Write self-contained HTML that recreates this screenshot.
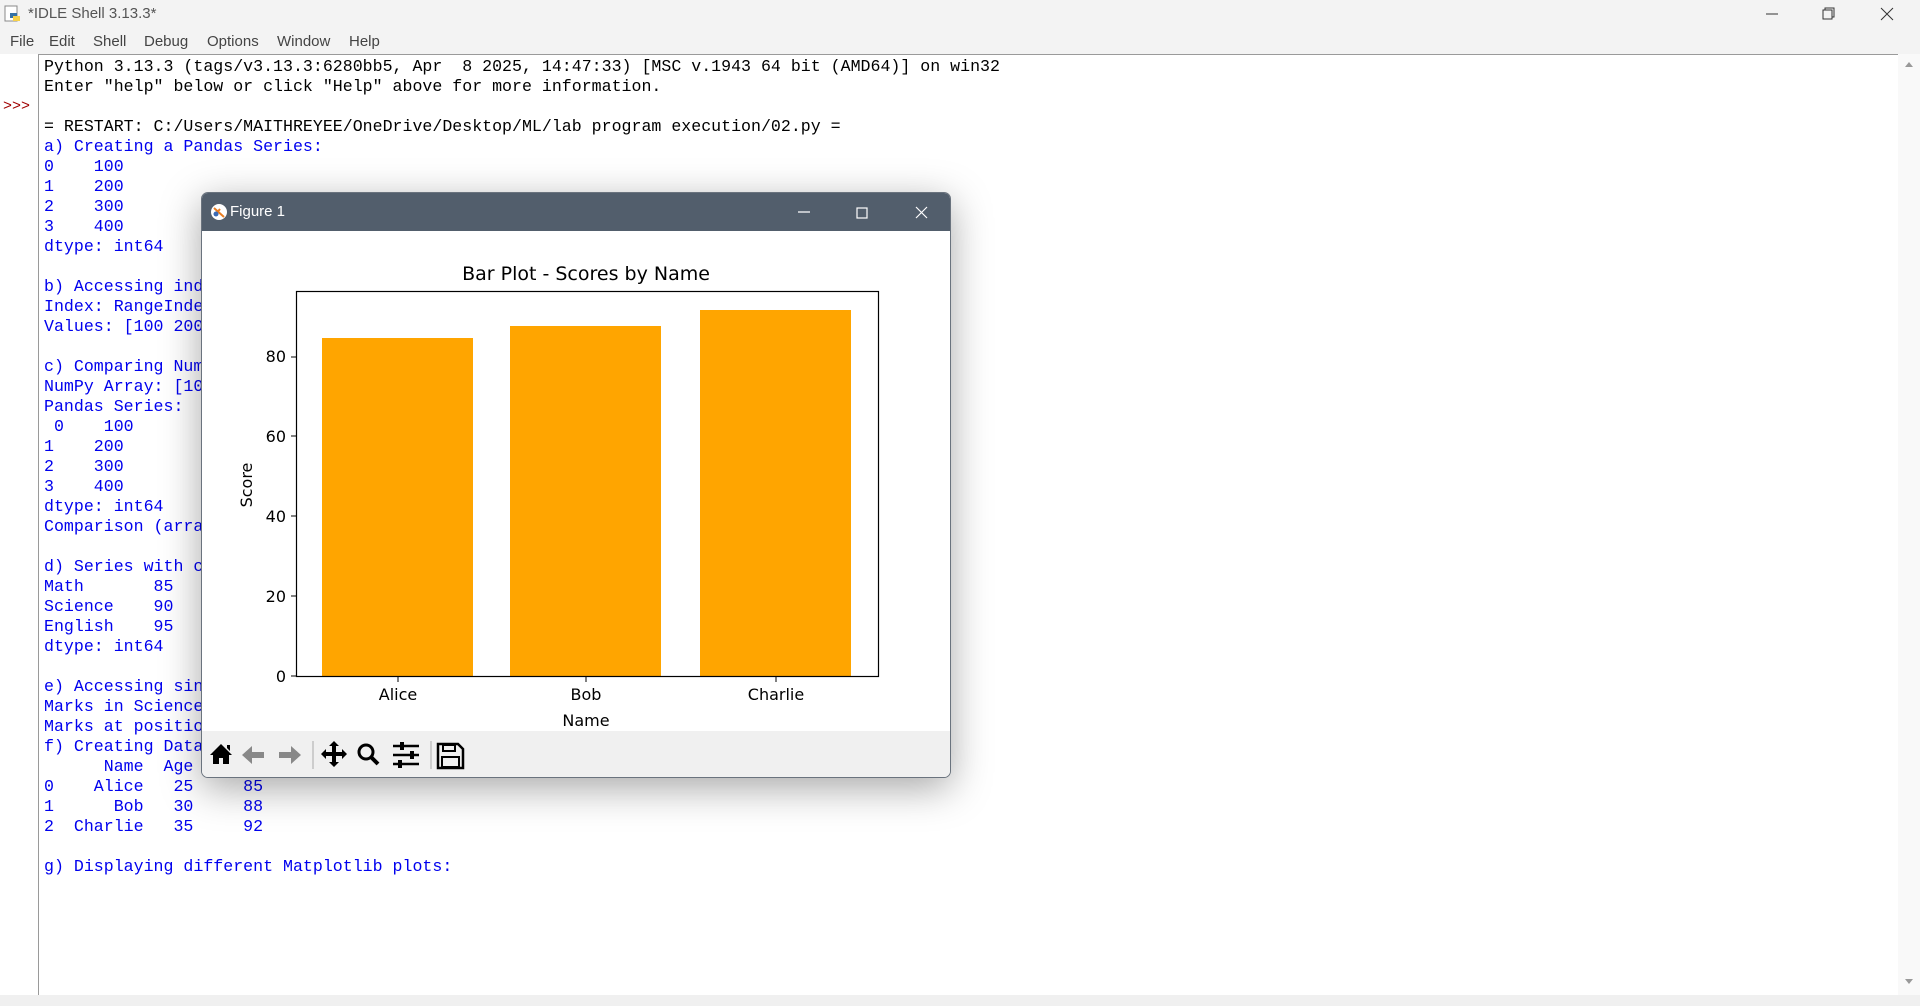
<!DOCTYPE html>
<html><head><meta charset="utf-8"><style>
*{margin:0;padding:0;box-sizing:border-box}
body{width:1920px;height:1006px;overflow:hidden;background:#fff;position:relative;font-family:"Liberation Sans",sans-serif}
.tb{position:absolute;left:0;top:0;width:1920px;height:29px;background:#f3f3f3}
.mb{position:absolute;left:0;top:29px;width:1920px;height:25px;background:#f3f3f3}
.mb span{position:absolute;top:4px;font-size:15px;color:#444}
.ta{position:absolute;left:38px;top:54px;width:1860px;height:941px;border-left:1px solid #9a9a9a;border-top:1px solid #9a9a9a;background:#fff}
pre{position:absolute;left:44px;top:57px;font-family:"Liberation Mono",monospace;font-size:16.6px;line-height:20px;color:#0000ee}
.k{color:#000}
.sb{position:absolute;left:1898px;top:54px;width:22px;height:941px;background:#f9f9f9}
.st{position:absolute;left:0;top:995px;width:1920px;height:11px;background:#f0f0f0}
.fig{position:absolute;left:201px;top:192px;width:750px;height:586px;background:#fff;border-radius:7px;overflow:hidden;box-shadow:0 10px 40px rgba(0,0,0,.35);border:1px solid #6a737e}
.ft{height:38px;background:#525e6c;color:#fff;font-size:15px;position:relative}
.tool{position:absolute;left:0;top:538px;width:750px;height:48px;background:#f0f0f0}
</style></head><body>
<div class="tb">
<svg style="position:absolute;left:4px;top:5px" width="18" height="18"><rect x="1" y="1" width="12" height="15" fill="#fff" stroke="#888"/><rect x="6" y="8" width="7" height="5" fill="#3572a5"/><rect x="9" y="11" width="7" height="5" fill="#f7d14a"/></svg>
<span style="position:absolute;left:28px;top:5px;font-size:15px;color:#555">*IDLE Shell 3.13.3*</span>
<svg style="position:absolute;left:1762px;top:6px" width="140" height="18" stroke="#333" fill="none" stroke-width="1"><line x1="4" y1="8" x2="16" y2="8"/><rect x="61" y="4" width="9" height="9"/><path d="M63 4V2h9v9h-2"/><path d="M119 2l12 12M131 2l-12 12"/></svg>
</div>
<div class="mb"><span style="left:10px">File</span><span style="left:49px">Edit</span><span style="left:93px">Shell</span><span style="left:144px">Debug</span><span style="left:207px">Options</span><span style="left:277px">Window</span><span style="left:349px">Help</span></div>
<div class="ta"></div>
<div style="position:absolute;left:3px;top:98px;font-family:'Liberation Mono',monospace;font-size:15px;color:#a00000">&gt;&gt;&gt;</div>
<pre><span class="k">Python 3.13.3 (tags/v3.13.3:6280bb5, Apr  8 2025, 14:47:33) [MSC v.1943 64 bit (AMD64)] on win32
Enter "help" below or click "Help" above for more information.

= RESTART: C:/Users/MAITHREYEE/OneDrive/Desktop/ML/lab program execution/02.py =</span>
a) Creating a Pandas Series:
0    100
1    200
2    300
3    400
dtype: int64

b) Accessing index and values:
Index: RangeIndex(start=0, stop=4, step=1)
Values: [100 200 300 400]

c) Comparing NumPy Array and Pandas Series:
NumPy Array: [100 200 300 400]
Pandas Series:
 0    100
1    200
2    300
3    400
dtype: int64
Comparison (array == series):

d) Series with custom index:
Math       85
Science    90
English    95
dtype: int64

e) Accessing single element:
Marks in Science: 90
Marks at position 0: 85
f) Creating DataFrame:
      Name  Age  Score
0    Alice   25     85
1      Bob   30     88
2  Charlie   35     92

g) Displaying different Matplotlib plots:</pre>
<div class="sb"><svg width="22" height="941"><path d="M7 13l4-5 4 5z" fill="#999"/><path d="M7 925l4 5 4-5z" fill="#999"/></svg></div>
<div class="st"></div>
<div class="fig">
<div class="ft">
<svg style="position:absolute;left:8px;top:10px" width="18" height="18"><circle cx="9" cy="9" r="8" fill="#fff"/><path d="M4 5l10 9M5 12l5-6" stroke="#e87d22" stroke-width="2"/><circle cx="6" cy="11" r="2.5" fill="#3a6ab5"/></svg>
<span style="position:absolute;left:28px;top:10px">Figure 1</span>
<svg style="position:absolute;left:594px;top:12px" width="140" height="16" stroke="#fff" fill="none" stroke-width="1.2"><line x1="2" y1="7" x2="14" y2="7"/><rect x="61" y="3" width="10" height="10"/><path d="M120 2l11 11M131 2l-11 11"/></svg>
</div>
<svg width="750" height="500" style="position:absolute;left:0;top:38px" font-family="DejaVu Sans,sans-serif" fill="#000">
<text x="384" y="49" font-size="19" text-anchor="middle">Bar Plot - Scores by Name</text>
<rect x="120" y="107" width="151" height="338" fill="#ffa500"/>
<rect x="308" y="95" width="151" height="350" fill="#ffa500"/>
<rect x="498" y="79" width="151" height="366" fill="#ffa500"/>
<rect x="94.5" y="60.5" width="582" height="385" fill="none" stroke="#000" stroke-width="1.2"/>
<g font-size="16" text-anchor="end">
<text x="84" y="451">0</text><text x="84" y="371">20</text><text x="84" y="291">40</text><text x="84" y="211">60</text><text x="84" y="131">80</text></g>
<g stroke="#000"><line x1="89" y1="445" x2="94" y2="445"/><line x1="89" y1="365" x2="94" y2="365"/><line x1="89" y1="285" x2="94" y2="285"/><line x1="89" y1="205" x2="94" y2="205"/><line x1="89" y1="126" x2="94" y2="126"/>
<line x1="196" y1="446" x2="196" y2="451"/><line x1="384" y1="446" x2="384" y2="451"/><line x1="574" y1="446" x2="574" y2="451"/></g>
<g font-size="16" text-anchor="middle"><text x="196" y="469">Alice</text><text x="384" y="469">Bob</text><text x="574" y="469">Charlie</text><text x="384" y="495">Name</text></g>
<text transform="translate(50,254) rotate(-90)" font-size="16" text-anchor="middle">Score</text>
</svg>
<div class="tool">
<svg width="300" height="48" fill="#000">
<path d="M8 24L19 13 30 24h-3v9h-6v-6h-4v6h-6v-9z M25 14h3v6l-3-3z"/>
<g fill="#888"><path d="M40 24l10-9v6h12v6H50v6z"/><path d="M99 24l-10-9v6H77v6h12v6z"/></g>
<line x1="111" y1="10" x2="111" y2="38" stroke="#aaa"/>
<path d="M132 10l-5 5h3v6h-6v-3l-5 5 5 5v-3h6v6h-3l5 5 5-5h-3v-6h6v3l5-5-5-5v3h-6v-6h3z"/>
<circle cx="164" cy="21" r="7" fill="none" stroke="#000" stroke-width="3"/><path d="M169 26l7 7" stroke="#000" stroke-width="4"/>
<g stroke="#000" stroke-width="2.5"><line x1="191" y1="15" x2="217" y2="15"/><line x1="191" y1="24" x2="217" y2="24"/><line x1="191" y1="33" x2="217" y2="33"/></g>
<rect x="198" y="11" width="4" height="8"/><rect x="208" y="20" width="4" height="8"/><rect x="196" y="29" width="4" height="8"/>
<line x1="229" y1="10" x2="229" y2="38" stroke="#aaa"/>
<path d="M236 13h20l5 5v19h-25z" fill="none" stroke="#000" stroke-width="2.5"/><rect x="241" y="14" width="12" height="6" fill="none" stroke="#000" stroke-width="2"/><rect x="240" y="26" width="17" height="10" fill="none" stroke="#000" stroke-width="2"/>
</svg>
</div>
</div>
</body></html>
